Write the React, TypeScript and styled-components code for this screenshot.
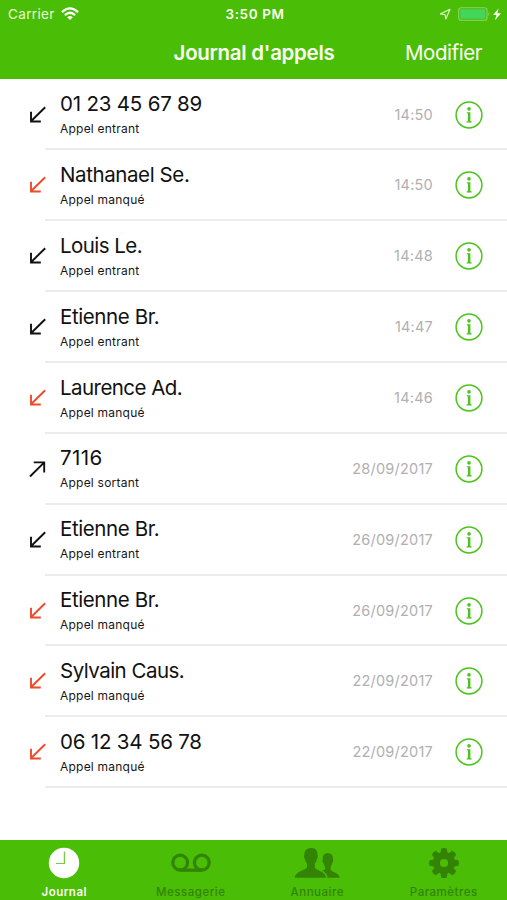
import React from "react";
import styled, { createGlobalStyle } from "styled-components";

const GREEN = "#4abd06";
const DIM = "#338405";

const GlobalStyle = createGlobalStyle`
  * { box-sizing: border-box; }
  body { margin: 0; background: #fff; font-family: Inter, "Liberation Sans", sans-serif; }
`;

const Screen = styled.div`
  width: 507px;
  height: 900px;
  display: flex;
  flex-direction: column;
  overflow: hidden;
  background: #fff;
`;

const Header = styled.header`
  flex: none;
  height: 79px;
  background: ${GREEN};
  color: #fbfff2;
`;

const StatusBar = styled.div`
  height: 27px;
  padding: 0 5px 0 8px;
  display: grid;
  grid-template-columns: 1fr auto 1fr;
  align-items: center;
  font-size: 13.5px;
  line-height: 27px;
`;

const StatusGroup = styled.div<{ $end?: boolean }>`
  display: flex;
  align-items: center;
  justify-content: ${(p) => (p.$end ? "flex-end" : "flex-start")};
  gap: 6px;
`;

const Carrier = styled.span`
  letter-spacing: 0.35px;
  color: #e8fbd6;
`;

const Clock = styled.span`
  padding-top: 1px;
  font-weight: 600;
  letter-spacing: 0.6px;
`;

const NavBar = styled.div`
  height: 52px;
  padding: 0 25px;
  display: grid;
  grid-template-columns: 1fr auto 1fr;
  align-items: center;
  line-height: 52px;
`;

const Title = styled.h1`
  grid-column: 2;
  margin: 0;
  padding-left: 1px;
  font-size: 20.5px;
  font-weight: 600;
  letter-spacing: -0.3px;
  white-space: nowrap;
`;

const EditButton = styled.button`
  justify-self: end;
  padding: 0;
  border: 0;
  background: none;
  color: inherit;
  font: inherit;
  font-size: 20.5px;
  letter-spacing: -0.45px;
`;

const List = styled.ul`
  flex: 1;
  margin: 0;
  padding: 0.6px 0 0;
  list-style: none;
`;

const Row = styled.li`
  height: 70.87px;
  display: flex;
`;

const ArrowCell = styled.div`
  flex: none;
  width: 45px;
  padding: 26px 0 0 28px;
  svg { display: block; }
`;

const RowBody = styled.div`
  flex: 1;
  display: flex;
  padding: 0 24px 0 15px;
  border-bottom: 2px solid #ececed;
`;

const Caller = styled.div`
  flex: 1;
  padding-top: 11.5px;
`;

const Name = styled.div<{ $tracking: number }>`
  font-size: 20.5px;
  line-height: 26px;
  letter-spacing: ${(p) => p.$tracking}px;
  color: #111;
`;

const Kind = styled.div`
  margin-top: 4px;
  font-size: 12px;
  line-height: 16px;
  letter-spacing: 0.22px;
  color: #161616;
`;

const Time = styled.time`
  padding-top: 25px;
  font-size: 14.5px;
  line-height: 20px;
  letter-spacing: 0.22px;
  color: #b0b0b2;
`;

const InfoButton = styled.button`
  width: 28px;
  height: 28px;
  margin: 21px 0 0 22px;
  padding: 0;
  border: 0;
  background: none;
  color: #4dc41e;
  svg { display: block; }
`;

const TabBar = styled.nav`
  flex: none;
  height: 60px;
  padding-left: 1px;
  display: grid;
  grid-template-columns: repeat(4, 1fr);
  background: ${GREEN};
`;

const Tab = styled.a<{ $active?: boolean }>`
  display: flex;
  flex-direction: column;
  align-items: center;
  padding-top: 6px;
  color: ${(p) => (p.$active ? "#fbfff2" : DIM)};
  svg { display: block; }
`;

const TabLabel = styled.span<{ $active?: boolean }>`
  margin-top: 4px;
  font-size: 11.5px;
  line-height: 16px;
  font-weight: ${(p) => (p.$active ? 600 : 500)};
  letter-spacing: 0.5px;
`;

const WifiIcon = () => (
  <svg width="18" height="14" viewBox="0 0 18 14" fill="none" stroke="#fff" strokeWidth="2.2">
    <path d="M1 5.1Q9-2.2 17 5.1" />
    <path d="M3.9 8.1Q9 3.4 14.1 8.1" />
    <path d="M9 13L6.2 10.2Q9 7.8 11.8 10.2Z" fill="#fff" stroke="none" />
  </svg>
);

const DeviceIcons = () => (
  <svg width="64" height="18" viewBox="438 4 64 18" fill="none">
    <path d="M440.5 12.8L450 8.4L445.8 18L445 13.6Z" stroke="#d8f6c5" strokeWidth="1.2" strokeLinejoin="round" />
    <rect x="458.7" y="6.7" width="28.3" height="12.6" rx="2.6" stroke="#8ed467" strokeWidth="1.1" />
    <rect x="460.3" y="8.3" width="25" height="9.4" rx="1" fill="#44d55b" />
    <path d="M488.3 11.2Q490.5 13 488.3 14.8Z" fill="#8ed467" />
    <path d="M498.7 7.3L493 14H496.4L495 19.3L501 12.3H497.4Z" fill="#f8ffe8" />
  </svg>
);

type CallType = "entrant" | "manqué" | "sortant";

const CallArrow = ({ type }: { type: CallType }) => (
  <svg width="18" height="18" viewBox="0 0 18 18" fill="none" stroke={type === "manqué" ? "#ed4b2b" : "#111"} strokeWidth="1.9">
    {type === "sortant" ? (
      <path d="M2 16.5L16.3 2.3M5.7 2.4H16.2V12.5" />
    ) : (
      <path d="M17.2 1.2L3.2 15M3 5.7V15.5H12.8" />
    )}
  </svg>
);

const InfoIcon = () => (
  <svg width="28" height="28" viewBox="0 0 28 28">
    <circle cx="14" cy="14" r="12.9" fill="none" stroke="currentColor" strokeWidth="1.5" />
    <circle cx="14" cy="7.9" r="1.8" fill="currentColor" />
    <path d="M11.8 11.3H15.4V20.1L16.7 20.4V21.4H11.6V20.4L12.9 20.1V12.6L11.8 12.3Z" fill="currentColor" />
  </svg>
);

const ClockIcon = () => (
  <svg width="32" height="34" viewBox="0 0 32 34">
    <circle cx="16" cy="17" r="15.2" fill="#fff" />
    <path d="M16.4 5.5V17.5H8" fill="none" stroke="#75cb45" strokeWidth="1.2" />
  </svg>
);

const VoicemailIcon = () => (
  <svg width="42" height="34" viewBox="0 0 42 34" fill="none" stroke="currentColor" strokeWidth="3.3">
    <circle cx="10.2" cy="16.6" r="7.4" />
    <circle cx="31.8" cy="16.6" r="7.4" />
    <path d="M10 24.2H32" />
  </svg>
);

const ContactsIcon = () => (
  <svg width="46" height="34" viewBox="0 0 46 34" fill="currentColor">
    <path d="M17.5 2C21.5 1.8 23.6 4.6 23.3 8.8C24.4 9.3 24 12 22.9 12.8C22.5 15.2 21.7 16.5 20.8 17.5V21.5C22 24.5 31 24.8 32.2 31.8H0.5C1.7 24.8 11 24.5 13 21.5V17.5C11.8 16.3 11.2 14.7 10.9 12.8C9.6 12 9.5 9.5 10.5 8.8C10.1 4.5 12.7 2 17.5 2Z" />
    <path d="M33.8 7.2C37.7 7.2 39.4 9.8 38.9 13.3C39.6 14.2 39.2 16 38.4 16.6C38.1 18.5 37.5 19.6 36.7 20.3V23.9C38.6 26.5 45 26.4 45.7 31.8H33.6C33.2 28 30.8 26.2 28 24.6C29.6 24.2 31 23.8 31 22.8V20.2C30.1 19.2 29.5 18.1 29.2 16.6C28.2 16 28.1 14 28.8 13.3C28.4 9.7 30 7.2 33.8 7.2Z" />
  </svg>
);

const GearIcon = () => (
  <svg width="32" height="34" viewBox="-16 -17 32 34" fill="currentColor">
    {[0, 45, 90, 135, 180, 225, 270, 315].map((angle) => (
      <path key={angle} d="M-3.7-8L-2.8-14.4Q0-15.7 2.8-14.4L3.7-8Z" transform={`rotate(${angle})`} />
    ))}
    <circle r="7.6" fill="none" stroke="currentColor" strokeWidth="7" />
  </svg>
);

const calls: { name: string; type: CallType; time: string; tracking: number }[] = [
  { name: "01 23 45 67 89", type: "entrant", time: "14:50", tracking: -0.2 },
  { name: "Nathanael Se.", type: "manqué", time: "14:50", tracking: -0.4 },
  { name: "Louis Le.", type: "entrant", time: "14:48", tracking: -0.55 },
  { name: "Etienne Br.", type: "entrant", time: "14:47", tracking: -0.4 },
  { name: "Laurence Ad.", type: "manqué", time: "14:46", tracking: -0.55 },
  { name: "7116", type: "sortant", time: "28/09/2017", tracking: 0.4 },
  { name: "Etienne Br.", type: "entrant", time: "26/09/2017", tracking: -0.4 },
  { name: "Etienne Br.", type: "manqué", time: "26/09/2017", tracking: -0.4 },
  { name: "Sylvain Caus.", type: "manqué", time: "22/09/2017", tracking: -0.52 },
  { name: "06 12 34 56 78", type: "manqué", time: "22/09/2017", tracking: -0.2 },
];

const tabs = [
  { label: "Journal", Icon: ClockIcon, active: true },
  { label: "Messagerie", Icon: VoicemailIcon, active: false },
  { label: "Annuaire", Icon: ContactsIcon, active: false },
  { label: "Paramètres", Icon: GearIcon, active: false },
];

export default function App() {
  return (
    <Screen>
      <GlobalStyle />
      <Header>
        <StatusBar>
          <StatusGroup>
            <Carrier>Carrier</Carrier>
            <WifiIcon />
          </StatusGroup>
          <Clock>3:50 PM</Clock>
          <StatusGroup $end>
            <DeviceIcons />
          </StatusGroup>
        </StatusBar>
        <NavBar>
          <Title>Journal d'appels</Title>
          <EditButton>Modifier</EditButton>
        </NavBar>
      </Header>
      <List>
        {calls.map((call, index) => (
          <Row key={index}>
            <ArrowCell>
              <CallArrow type={call.type} />
            </ArrowCell>
            <RowBody>
              <Caller>
                <Name $tracking={call.tracking}>{call.name}</Name>
                <Kind>Appel {call.type}</Kind>
              </Caller>
              <Time>{call.time}</Time>
              <InfoButton aria-label="Informations">
                <InfoIcon />
              </InfoButton>
            </RowBody>
          </Row>
        ))}
      </List>
      <TabBar>
        {tabs.map(({ label, Icon, active }) => (
          <Tab key={label} $active={active}>
            <Icon />
            <TabLabel $active={active}>{label}</TabLabel>
          </Tab>
        ))}
      </TabBar>
    </Screen>
  );
}
